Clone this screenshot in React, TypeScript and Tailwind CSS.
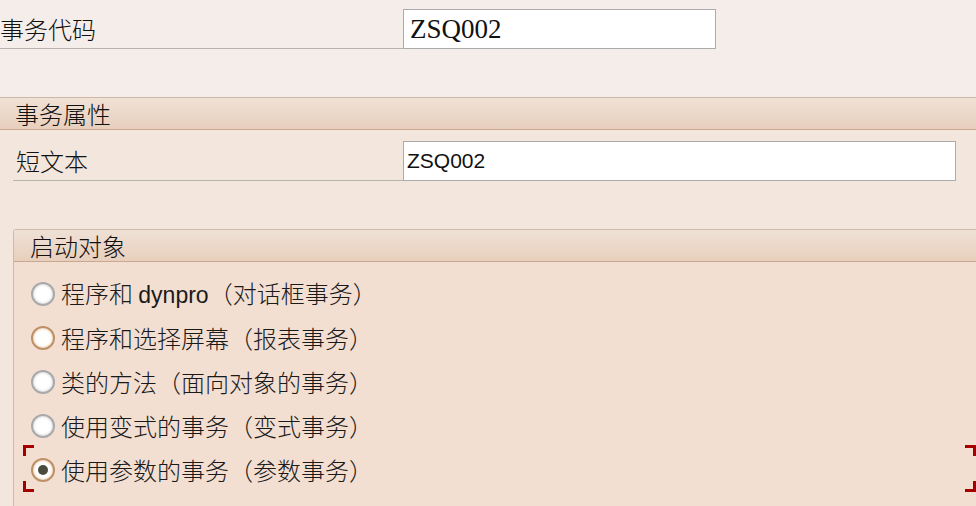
import React from "react";

const cjk = {
  fontFamily: '"Noto Sans CJK SC", "Liberation Sans", sans-serif',
};

type RadioProps = { label: React.ReactNode; state?: "plain" | "hover" | "checked" };

const Radio = ({ state = "plain" }: { state?: RadioProps["state"] }) => {
  const ring =
    state === "plain"
      ? "border-[#a9a9a9] shadow-[inset_0_0_3px_#bdbdbd]"
      : "border-[#bf9064] shadow-[inset_0_0_3px_#d8b898]";
  return (
    <div
      className={`w-[24px] h-[24px] rounded-full border-2 bg-white flex items-center justify-center shrink-0 ${ring}`}
    >
      {state === "checked" && (
        <div className="w-[10px] h-[10px] rounded-full bg-[#4b4b3d]" />
      )}
    </div>
  );
};

const RadioRow = ({ label, state }: RadioProps) => (
  <div className="h-[44px] flex items-center pl-[17px]">
    <Radio state={state} />
    <span className="ml-[6px] text-[24px] text-[#1a1a1a] font-light leading-none" style={cjk}>
      {label}
    </span>
  </div>
);

const Corner = ({ pos }: { pos: string }) => (
  <div className={`absolute w-[11px] h-[11px] border-[#a40000] ${pos}`} />
);

export default function App() {
  return (
    <div className="w-[976px] h-[506px] overflow-hidden bg-[#f3e6dd] text-[#111]">
      {/* 事务代码 */}
      <div className="h-[97px] bg-[#f5ede9] pt-[9px]">
        <div className="flex">
          <div
            className="w-[403px] h-[40px] border-b border-[#b9b3ae] flex items-center text-[24px] font-light"
            style={cjk}
          >
            事务代码
          </div>
          <div
            className="w-[313px] h-[40px] bg-white border border-[#ababab] flex items-center pl-[6px] text-[27px]"
            style={{ fontFamily: '"Liberation Serif", serif' }}
          >
            ZSQ002
          </div>
        </div>
      </div>

      {/* 事务属性 header */}
      <div
        className="h-[33px] border-t border-b border-t-[#cdb8a8] border-b-[#c9a891] bg-gradient-to-b from-[#f0e2d6] to-[#e8cfbd] flex items-center pl-[15px] text-[24px] font-light"
        style={cjk}
      >
        事务属性
      </div>

      {/* 短文本 */}
      <div className="mt-[11px] flex">
        <div
          className="ml-[13px] w-[390px] h-[40px] border-b border-[#b9b3ae] flex items-center pl-[3px] text-[24px] font-light"
          style={cjk}
        >
          短文本
        </div>
        <div
          className="w-[553px] h-[40px] bg-white border border-[#ababab] flex items-center pl-[3px] text-[21px]"
          style={{ fontFamily: '"Liberation Sans", sans-serif' }}
        >
          ZSQ002
        </div>
      </div>

      {/* 启动对象 group */}
      <div className="mt-[48px] ml-[13px] border-l border-t border-[#d2b9a6] rounded-tl-[3px] bg-[#f2dfd2] h-[300px]">
        <div
          className="h-[32px] border-b border-[#c9a891] bg-gradient-to-b from-[#efe1d6] to-[#e8cfbd] flex items-center pl-[16px] text-[24px] font-light"
          style={cjk}
        >
          启动对象
        </div>
        <div className="pt-[10px]">
          <RadioRow
            label={
              <>
                程序和{" "}
                <span className="font-normal text-[23px]" style={{ fontFamily: '"Liberation Sans", sans-serif' }}>
                  dynpro
                </span>
                （对话框事务）
              </>
            }
          />
          <RadioRow label="程序和选择屏幕（报表事务）" state="hover" />
          <RadioRow label="类的方法（面向对象的事务）" />
          <RadioRow label="使用变式的事务（变式事务）" />
          <div className="relative ml-[9px]">
            <Corner pos="left-0 -top-[3px] border-l-[3px] border-t-[3px]" />
            <Corner pos="left-0 bottom-0 border-l-[3px] border-b-[3px]" />
            <Corner pos="right-0 -top-[3px] border-r-[3px] border-t-[3px]" />
            <Corner pos="right-0 bottom-0 border-r-[3px] border-b-[3px]" />
            <div className="-ml-[9px]">
              <RadioRow label="使用参数的事务（参数事务）" state="checked" />
            </div>
          </div>
        </div>
      </div>
    </div>
  );
}
